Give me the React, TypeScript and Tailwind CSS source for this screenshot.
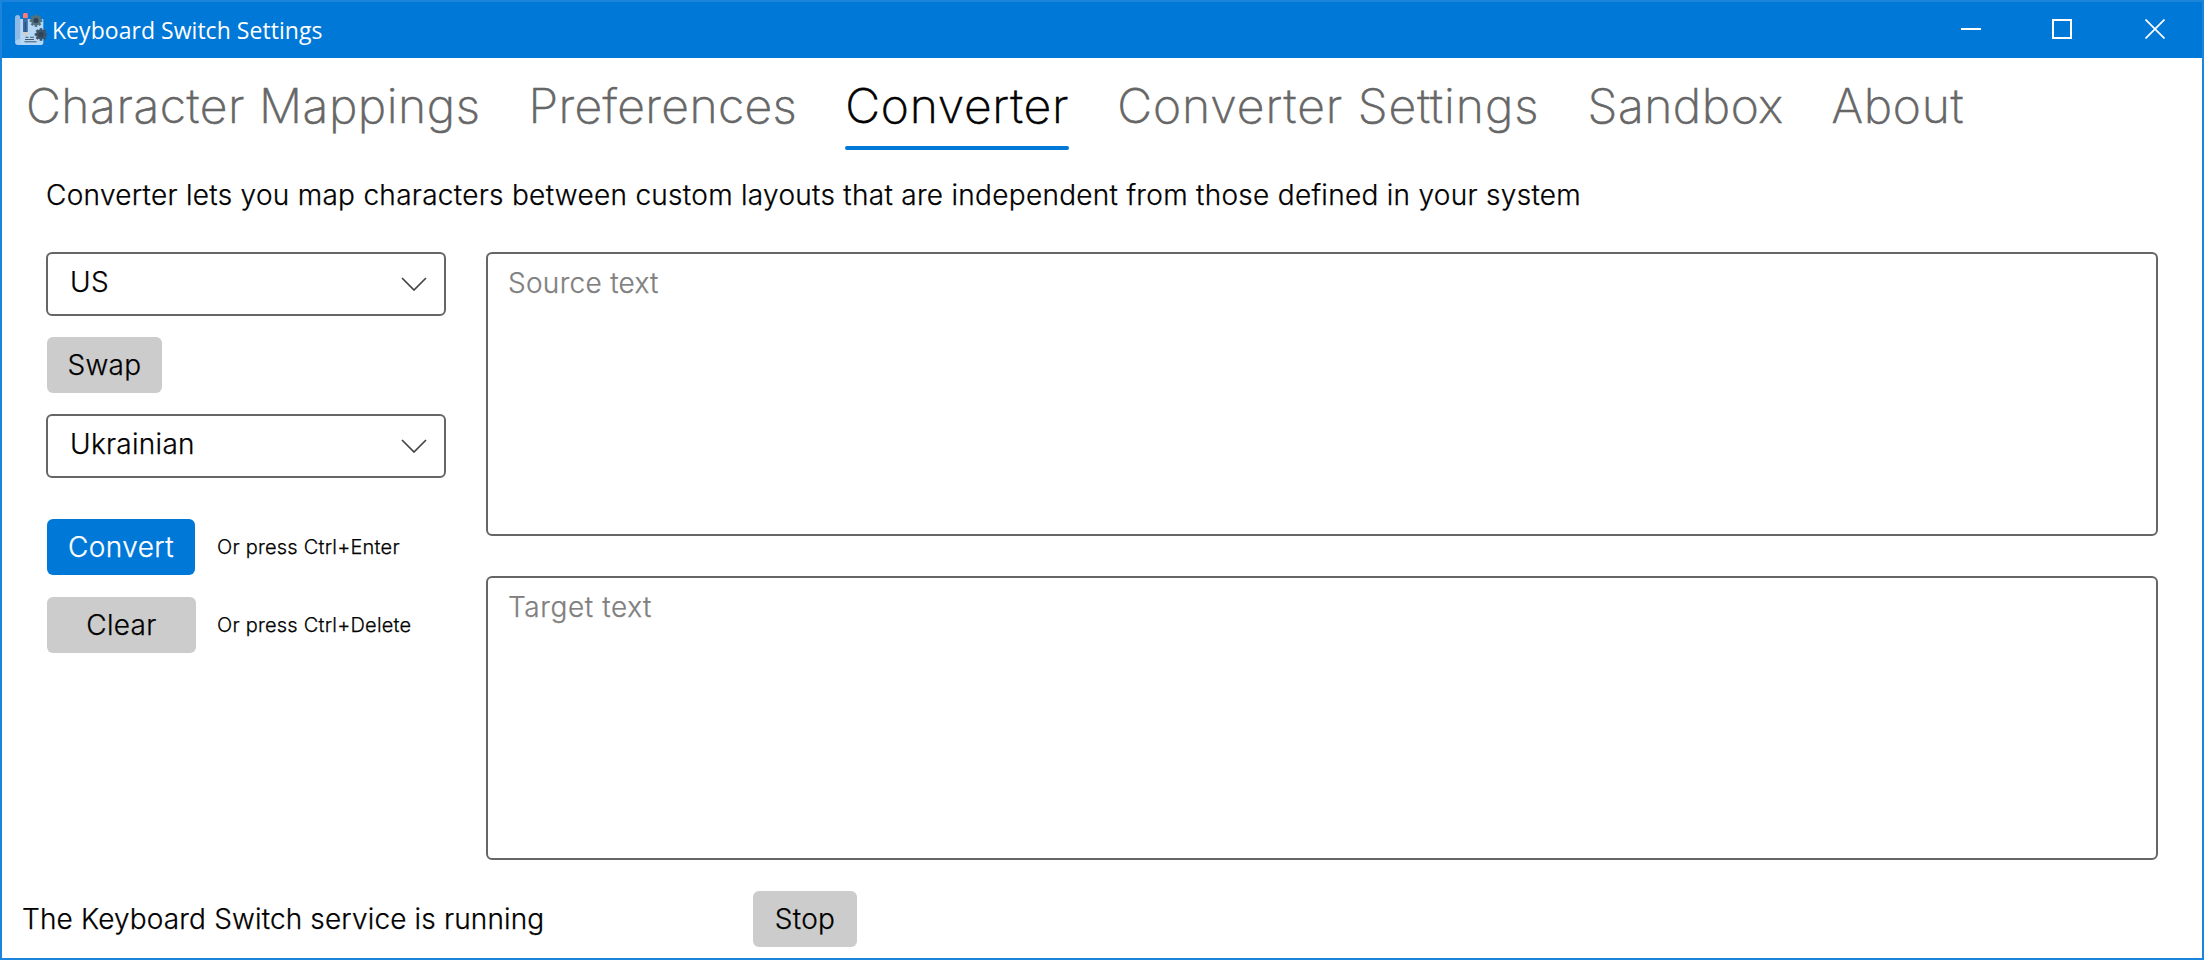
const tabs = [
  { label: "Character Mappings", className: "tracking-[0.55px]" },
  { label: "Preferences", className: "tracking-[0.38px]" },
  { label: "Converter", className: "tracking-[0.76px]" },
  { label: "Converter Settings", className: "tracking-[0.99px]" },
  { label: "Sandbox", className: "tracking-[0.5px]" },
  { label: "About", className: "tracking-[0.75px]" },
];

function Gear({ cx, cy, r, fill }: { cx: number; cy: number; r: number; fill: string }) {
  return (
    <g>
      {[0, 45, 90, 135].map((a) => (
        <rect key={a} x={cx - 1.3} y={cy - r} width={2.6} height={r * 2} fill={fill} transform={`rotate(${a} ${cx} ${cy})`} />
      ))}
      <circle cx={cx} cy={cy} r={r - 1.4} fill={fill} />
      <circle cx={cx} cy={cy} r={2.5} fill="#2f4356" />
    </g>
  );
}

function AppIcon() {
  return (
    <svg width="32" height="32" viewBox="0 0 32 32">
      <path d="M4 6h24.300v24a2 2 0 0 1-2 2H3z" fill="#b4d8f5" />
      <path d="M0 4.500a2.600 2.600 0 0 1 5.200 0V26H3a3 3 0 0 0-3 3z" fill="#8fb9e6" />
      <path d="M0 29a3 3 0 0 1 3-3h2.500v3a2 2 0 0 0 2 3H3a3 3 0 0 1-3-3z" fill="#a9cdf0" />
      <path d="M8 2a2.400 2.400 0 0 1 4.800 0v3H8z" fill="#ff7b79" />
      <path d="M8 5h4.800v14H8z" fill="#3d6da5" />
      <path d="M9.700 9h1.400v10H9.700z" fill="#2f4f7c" />
      <path d="M8 19h4.800l-2.400 5z" fill="#dcc9bd" />
      <path d="M10.500 24.300h3M15 24.300h4M10 26.500h9M9.500 28.800h12" stroke="#34495e" strokeWidth="0.9" />
      <Gear cx={21} cy={7.600} r={6.300} fill="#52717d" />
      <Gear cx={26} cy={21.500} r={6.300} fill="#3d5468" />
    </svg>
  );
}

function Select({ value }: { value: string }) {
  return (
    <button className="flex h-16 w-[400px] items-center justify-between rounded-[6px] border-2 border-[#666666] bg-white pl-[22px] pr-[17px] text-left">
      <span className="-mt-1">{value}</span>
      <svg width="26" height="14" viewBox="0 0 26 14" fill="none" stroke="#444444" strokeWidth="1.7">
        <path d="M1 1l12 12L25 1" />
      </svg>
    </button>
  );
}

export default function App() {
  return (
    <div className="flex h-[960px] w-[2204px] flex-col border-2 border-[#1c84da] bg-white font-['Inter',sans-serif] text-[28px] leading-[34px] font-light tracking-[0.29px] text-black [-webkit-text-stroke-width:0.25px]">
      <header className="flex h-14 shrink-0 items-center bg-[#0078d7] text-white [-webkit-text-stroke-width:0]">
        <div className="-mt-[2px] ml-[13px]"><AppIcon /></div>
        <span className="ml-[5px] font-['Open_Sans',sans-serif] text-[23px] font-normal tracking-[0.04px]">Keyboard Switch Settings</span>
        <div className="-mt-[2px] mr-[37px] ml-auto flex items-center">
          <svg className="mr-[71px]" width="20" height="20" viewBox="0 0 20 20" stroke="white" strokeWidth="2"><path d="M0 10h20" /></svg>
          <svg className="mr-[73px]" width="20" height="20" viewBox="0 0 20 20" fill="none" stroke="white" strokeWidth="2"><path d="M1 1h18v18H1z" /></svg>
          <svg width="20" height="20" viewBox="0 0 20 20" stroke="white" strokeWidth="1.7"><path d="M.5 .5l19 19M19.500 .5l-19 19" /></svg>
        </div>
      </header>
      <nav className="flex h-24 shrink-0 items-start gap-12 pt-[19px] pl-6 text-[48px] leading-[58px] font-extralight [-webkit-text-stroke-width:0.6px]">
        {tabs.map(({ label, className }) =>
          label === "Converter" ? (
            <button key={label} className={`flex flex-col text-black ${className}`}>
              {label}
              <span className="mt-[11px] h-1 w-full rounded-full bg-[#0078d7]" />
            </button>
          ) : (
            <button key={label} className={`text-[#666666] ${className}`}>{label}</button>
          )
        )}
      </nav>
      <p className="mt-6 ml-[44px] shrink-0">
        Converter lets you map characters between custom layouts that are independent from those defined in your system
      </p>
      <main className="mt-10 ml-[44px] flex h-[608px] shrink-0 gap-10">
        <section className="flex w-[400px] flex-col">
          <Select value="US" />
          <button className="mt-[21px] ml-px h-14 w-[115px] rounded-[6px] bg-[#cccccc]">Swap</button>
          <div className="mt-[21px]"><Select value="Ukrainian" /></div>
          <div className="mt-[41px] ml-px flex items-center">
            <button className="h-14 w-[148px] rounded-[6px] bg-[#0078d7] tracking-[0.4px] text-white">Convert</button>
            <span className="ml-[22px] text-[20px] tracking-[0.22px]">Or press Ctrl+Enter</span>
          </div>
          <div className="mt-[22px] ml-px flex items-center">
            <button className="h-14 w-[149px] rounded-[6px] bg-[#cccccc]">Clear</button>
            <span className="ml-[21px] text-[20px] tracking-[0.22px]">Or press Ctrl+Delete</span>
          </div>
        </section>
        <section className="flex w-[1672px] flex-col gap-10">
          <textarea className="h-[284px] resize-none rounded-[6px] border-2 border-[#666666] px-5 py-[12px] placeholder:text-[#808080]" placeholder="Source text" />
          <textarea className="h-[284px] resize-none rounded-[6px] border-2 border-[#666666] px-5 py-[12px] tracking-[0.6px] placeholder:text-[#808080]" placeholder="Target text" />
        </section>
      </main>
      <footer className="mt-[31px] flex h-14 shrink-0 items-center pl-5">
        <span className="w-[731px] tracking-[0.15px]">The Keyboard Switch service is running</span>
        <button className="h-14 w-[104px] rounded-[6px] bg-[#cccccc]">Stop</button>
      </footer>
    </div>
  );
}
